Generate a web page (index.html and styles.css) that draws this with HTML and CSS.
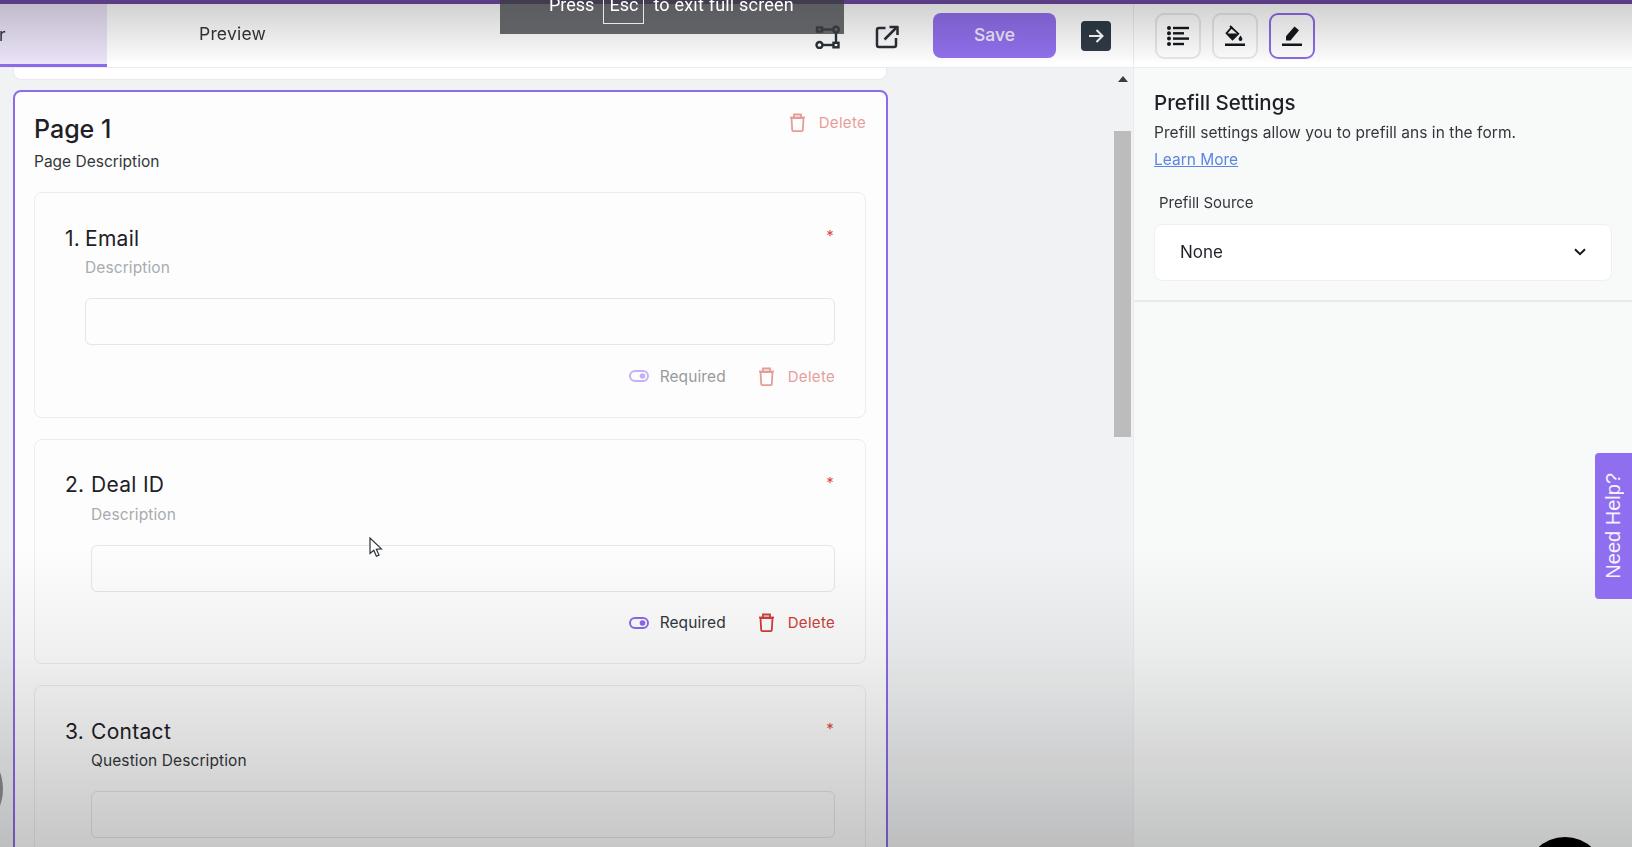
FILE: index.html

```html
<!DOCTYPE html>
<html lang="en">
<head>
    <meta charset="UTF-8">
    <title>Form Builder</title>
    <meta name="viewport" content="width=device-width, initial-scale=1.0">
    <link rel="stylesheet" href="styles.css">
</head>
<body>
    <div class="app">
        <div class="top-strip"></div>
        <div class="workspace">
            <section class="builder">
                <div class="toolbar">
                    <div class="tab tab-active"><span class="tab-cut">r</span></div>
                    <div class="tab tab-preview">Preview</div>
                    <div class="toolbar-actions">
                        <button class="icon-plain" aria-label="Flow">
                            <svg width="25" height="24" viewBox="0 0 25 24" fill="none" stroke="#2b3138" stroke-width="2.4">
                                <rect x="2" y="2.500" width="5" height="4"/>
                                <path d="M7 4.500h12"/>
                                <circle cx="21" cy="4.500" r="2.700"/>
                                <path d="M21 7.500v11"/>
                                <circle cx="4.500" cy="20" r="3"/>
                                <path d="M7.500 20h11"/>
                                <rect x="18.500" y="17.800" width="5" height="4.500"/>
                            </svg>
                        </button>
                        <button class="icon-plain" aria-label="Open">
                            <svg width="24" height="24" viewBox="0 0 24 24" fill="none" stroke="#2b3138" stroke-width="2.500" stroke-linejoin="round">
                                <path d="M10.500 3H4a2 2 0 0 0-2 2v15a2 2 0 0 0 2 2h15a2 2 0 0 0 2-2v-7"/>
                                <path d="M9.500 14.500L21 3"/>
                                <path d="M14.500 2h8v8"/>
                            </svg>
                        </button>
                        <button class="save-btn">Save</button>
                        <button class="next-btn" aria-label="Next">
                            <svg width="18" height="18" viewBox="0 0 18 18" fill="none" stroke="#fff" stroke-width="2">
                                <path d="M2 9h13.500"/>
                                <path d="M9.500 3l6 6-6 6"/>
                            </svg>
                        </button>
                    </div>
                </div>

                <div class="canvas">
                    <div class="canvas-scroll">
                        <div class="prev-page"></div>
                        <div class="page-card">
                            <div class="page-head">
                                <div>
                                    <h1>Page 1</h1>
                                    <p class="page-desc">Page Description</p>
                                </div>
                                <a class="delete faded">
                                    <svg class="trash" width="17" height="19" viewBox="0 0 17 19" fill="none" stroke="currentColor" stroke-width="1.800">
                                        <path d="M2.500 5h12l-.7 12.200a1 1 0 0 1-1 .9H4.200a1 1 0 0 1-1-.9z"/>
                                        <path d="M1 4.500h15"/>
                                        <path d="M5 4V1.500h7V4"/>
                                    </svg>
                                    Delete
                                </a>
                            </div>

                            <div class="question">
                                <div class="q-title"><span class="q-num">1.</span><span class="q-label q-email">Email</span><span class="star">*</span></div>
                                <div class="q-desc q-email muted">Description</div>
                                <div class="q-input q-email"></div>
                                <div class="q-actions faded-row">
                                    <span class="required">
                                        <svg class="toggle" width="20" height="12" viewBox="0 0 20 12"><rect x="1" y="1" width="18" height="10" rx="5" fill="none" stroke="currentColor" stroke-width="2"/><circle cx="13.500" cy="6" r="2.800" fill="currentColor"/></svg>
                                        Required
                                    </span>
                                    <a class="delete">
                                        <svg class="trash" width="17" height="19" viewBox="0 0 17 19" fill="none" stroke="currentColor" stroke-width="1.800">
                                            <path d="M2.500 5h12l-.7 12.200a1 1 0 0 1-1 .9H4.200a1 1 0 0 1-1-.9z"/>
                                            <path d="M1 4.500h15"/>
                                            <path d="M5 4V1.500h7V4"/>
                                        </svg>
                                        Delete
                                    </a>
                                </div>
                            </div>

                            <div class="question">
                                <div class="q-title"><span class="q-num">2.</span><span class="q-label">Deal ID</span><span class="star">*</span></div>
                                <div class="q-desc muted">Description</div>
                                <div class="q-input"></div>
                                <div class="q-actions">
                                    <span class="required">
                                        <svg class="toggle" width="20" height="12" viewBox="0 0 20 12"><rect x="1" y="1" width="18" height="10" rx="5" fill="none" stroke="currentColor" stroke-width="2"/><circle cx="13.500" cy="6" r="2.800" fill="currentColor"/></svg>
                                        Required
                                    </span>
                                    <a class="delete">
                                        <svg class="trash" width="17" height="19" viewBox="0 0 17 19" fill="none" stroke="currentColor" stroke-width="1.800">
                                            <path d="M2.500 5h12l-.7 12.200a1 1 0 0 1-1 .9H4.200a1 1 0 0 1-1-.9z"/>
                                            <path d="M1 4.500h15"/>
                                            <path d="M5 4V1.500h7V4"/>
                                        </svg>
                                        Delete
                                    </a>
                                </div>
                            </div>

                            <div class="question">
                                <div class="q-title"><span class="q-num">3.</span><span class="q-label">Contact</span><span class="star">*</span></div>
                                <div class="q-desc">Question Description</div>
                                <div class="q-input"></div>
                            </div>
                        </div>
                    </div>
                    <div class="scrollbar">
                        <span class="scroll-up"></span>
                        <span class="scroll-thumb"></span>
                    </div>
                </div>
            </section>

            <aside class="settings">
                <div class="settings-tools">
                    <button class="tool" aria-label="Fields">
                        <svg width="22" height="22" viewBox="0 0 22 22" fill="#15181c">
                            <circle cx="2" cy="3" r="2"/><rect x="6" y="1.800" width="16" height="2.400"/>
                            <circle cx="2" cy="8.300" r="2"/><rect x="6" y="7.100" width="11" height="2.400"/>
                            <circle cx="2" cy="13.600" r="2"/><rect x="6" y="12.400" width="16" height="2.400"/>
                            <circle cx="2" cy="19" r="2"/><rect x="6" y="17.800" width="11" height="2.400"/>
                        </svg>
                    </button>
                    <button class="tool" aria-label="Theme">
                        <svg width="20" height="22" viewBox="0 0 20 22">
                            <path d="M6.500 2.500l6.800 6.200-5.800 5.800-6-6.200z" fill="none" stroke="#15181c" stroke-width="1.800"/>
                            <path d="M2 8.500h10.500l-5 5.500z" fill="#15181c"/>
                            <path d="M5 1l2.500 2.500" stroke="#15181c" stroke-width="1.800"/>
                            <path d="M15.500 10.500c1 1.400 1.900 2.500 1.900 3.500a1.900 1.900 0 0 1-3.800 0c0-1 .9-2.100 1.900-3.500z" fill="#15181c"/>
                            <rect x="0" y="18.500" width="20" height="2.500" fill="#15181c"/>
                        </svg>
                    </button>
                    <button class="tool tool-active" aria-label="Prefill">
                        <svg width="20" height="22" viewBox="0 0 20 22" fill="#15181c">
                            <path d="M12.500 1.500l4.500 3.700-8.500 10.300H4v-4.200z"/>
                            <rect x="0" y="18.500" width="20" height="2.500"/>
                        </svg>
                    </button>
                </div>
                <div class="prefill">
                    <h2>Prefill Settings</h2>
                    <p>Prefill settings allow you to prefill ans in the form.</p>
                    <a class="learn-more">Learn More</a>
                    <label class="field-label">Prefill Source</label>
                    <div class="select-box">
                        <span>None</span>
                        <svg width="12" height="8" viewBox="0 0 12 8" fill="none" stroke="#15181c" stroke-width="2"><path d="M1 1.200l5 5 5-5"/></svg>
                    </div>
                </div>
            </aside>
        </div>

        <div class="shade-top"></div>
        <div class="shade-bottom"></div>

        <div class="fullscreen-note">
            <span>Press</span><span class="esc-key">Esc</span><span class="note-rest">to exit full screen</span>
        </div>
        <div class="need-help"><span>Need Help?</span></div>
        <div class="chat-bubble"></div>
        <div class="edge-blob"></div>
        <svg class="cursor" width="15" height="21" viewBox="0 0 15 21" fill="#fff" stroke="#2b3138" stroke-width="1.200">
            <path d="M1 1v15.500l3.800-3.300 2.600 6 2.600-1.100-2.600-5.900 5-.3z"/>
        </svg>
    </div>
</body>
</html>
```

FILE: styles.css

```css
:root {
    --purple: #8b6be8;
    --purple-dark: #5a3d85;
    --line: #ebecee;
    --text: #1d2126;
    --red: #cf3f36;
}

* {
    box-sizing: border-box;
}

body {
    margin: 0;
    font-family: "Inter", "Noto Sans", sans-serif;
    color: var(--text);
    background: #f1f2f3;
}

h1, h2, p {
    margin: 0;
    font-weight: 500;
}

button {
    font-family: inherit;
    border: none;
    background: none;
    padding: 0;
}

.app {
    position: relative;
    width: 1632px;
    height: 847px;
    overflow: hidden;
    display: flex;
    flex-direction: column;
    filter: blur(0.4px);
}

.top-strip {
    height: 4px;
    flex: none;
    background: var(--purple-dark);
}

.workspace {
    flex: 1;
    display: flex;
    min-height: 0;
}

/* left side */
.builder {
    width: 1134px;
    display: flex;
    flex-direction: column;
    border-right: 1px solid var(--line);
}

.toolbar {
    height: 63px;
    flex: none;
    display: flex;
    background: #fff;
}

.tab {
    display: flex;
    align-items: center;
    font-size: 17.500px;
    color: #33373c;
}

.tab-active {
    width: 107px;
    background: #ece4f8;
    border-bottom: 3px solid #8b6be8;
}

.tab-cut {
    margin-left: -1px;
}

.tab-preview {
    margin-left: 92px;
    padding-bottom: 4px;
    letter-spacing: 0.2px;
}

.toolbar-actions {
    margin-left: auto;
    display: flex;
    align-items: center;
    padding-right: 22px;
}

.icon-plain {
    display: flex;
    margin-right: 35px;
    margin-top: 2px;
}

.icon-plain + .icon-plain {
    margin-right: 34px;
}

.save-btn {
    width: 123px;
    height: 45px;
    margin-right: 25px;
    padding-bottom: 2px;
    border-radius: 8px;
    background: #9270ee;
    color: #f1ecff;
    font-size: 17.500px;
    font-weight: 500;
}

.next-btn {
    width: 30px;
    height: 30px;
    margin-top: 1px;
    border-radius: 4px;
    background: #2e3a46;
    display: flex;
    align-items: center;
    justify-content: center;
}

.canvas {
    flex: 1;
    display: flex;
    min-height: 0;
    overflow: hidden;
    border-top: 1px solid var(--line);
}

.canvas-scroll {
    flex: 1;
    padding-left: 13px;
    overflow: hidden;
}

.prev-page {
    width: 874px;
    height: 12px;
    margin-bottom: 10px;
    background: #fff;
    border: 1px solid #e8e9eb;
    border-top: none;
    border-radius: 0 0 8px 8px;
}

.page-card {
    width: 875px;
    padding: 0 20px 40px 19px;
    background: #fdfdfd;
    border: 2px solid var(--purple);
    border-radius: 8px;
}

.page-head {
    display: flex;
    justify-content: space-between;
    align-items: flex-start;
    height: 100px;
}

.page-head h1 {
    margin-top: 21px;
    font-size: 25px;
    line-height: 32px;
}

.page-desc {
    margin-top: 7px;
    font-size: 15.500px;
    font-weight: 400;
    line-height: 20px;
    color: #33373c;
}

.page-head .delete {
    margin-top: 21px;
}

.delete {
    display: flex;
    align-items: center;
    gap: 13px;
    font-size: 15px;
    letter-spacing: 0.3px;
    color: var(--red);
}

.faded {
    opacity: 0.5;
}

.question {
    height: 225.500px;
    margin-bottom: 21px;
    padding: 0 30px;
    background: #fdfdfd;
    border: 1px solid var(--line);
    border-radius: 8px;
}

.q-title {
    display: flex;
    align-items: center;
    margin-top: 31px;
    height: 28px;
    font-size: 21px;
    letter-spacing: 0.3px;
}

.q-num {
    width: 26px;
}

.q-label {
    flex: 1;
}

.q-label.q-email {
    margin-left: -6px;
}

.q-title .star {
    color: #e2483d;
    font-size: 15px;
    line-height: 28px;
    margin-top: -4px;
    margin-right: 1px;
}

.q-desc {
    margin: 5px 0 0 26px;
    font-size: 15.500px;
    letter-spacing: 0.1px;
    line-height: 22px;
    color: #33373c;
}

.q-desc.q-email,
.q-input.q-email {
    margin-left: 20px;
}

.muted {
    color: #a8abb0;
}

.q-input {
    height: 47px;
    margin: 19px 0 0 26px;
    background: #fdfdfd;
    border: 1px solid #e5e6e8;
    border-radius: 6px;
}

.q-actions {
    display: flex;
    justify-content: flex-end;
    align-items: center;
    gap: 32px;
    height: 24px;
    margin-top: 19px;
}

.faded-row {
    opacity: 0.5;
}

.required {
    display: flex;
    align-items: center;
    gap: 11px;
    font-size: 15.500px;
    letter-spacing: 0.1px;
    color: #33373c;
}

.toggle {
    color: var(--purple);
}

.scrollbar {
    position: relative;
    width: 21px;
    flex: none;
    background: #f1f2f3;
}

.scroll-up {
    display: block;
    width: 0;
    margin: 8px auto 0;
    border-left: 5px solid transparent;
    border-right: 5px solid transparent;
    border-bottom: 6px solid #3a3d40;
}

.scroll-thumb {
    display: block;
    width: 17px;
    height: 306px;
    margin: 49px 0 0 2px;
    background: #bcbcbc;
}

/* right side */
.settings {
    flex: 1;
    display: flex;
    flex-direction: column;
    background: #f8f9f9;
}

.settings-tools {
    height: 63px;
    flex: none;
    display: flex;
    gap: 11px;
    padding: 9px 0 0 21px;
    background: #fff;
}

.tool {
    width: 46px;
    height: 46px;
    display: flex;
    align-items: center;
    justify-content: center;
    border: 2px solid #e8e8ea;
    border-radius: 9px;
}

.tool-active {
    border-color: var(--purple);
}

.prefill {
    padding: 21px 20px 0 20px;
    height: 235px;
    border-top: 1px solid var(--line);
    border-bottom: 2px solid #e9eaec;
}

.prefill h2 {
    font-size: 20.500px;
    line-height: 28px;
}

.prefill p {
    margin-top: 6px;
    font-size: 15.500px;
    font-weight: 400;
    letter-spacing: 0.05px;
    line-height: 20px;
    color: #33373c;
}

.learn-more {
    display: block;
    margin-top: 6px;
    font-size: 15.500px;
    line-height: 22px;
    color: #5b86e5;
    text-decoration: underline;
}

.field-label {
    display: block;
    margin: 22px 0 0 5px;
    font-size: 15px;
    line-height: 20px;
    color: #33373c;
}

.select-box {
    height: 57px;
    margin: 11px 0 0 0;
    padding: 0 25px 1px 25px;
    display: flex;
    justify-content: space-between;
    align-items: center;
    background: #fff;
    border: 1px solid #eff0f2;
    border-radius: 8px;
    font-size: 17px;
}

/* things lying over the page */
.shade-top,
.shade-bottom {
    position: absolute;
    left: 0;
    right: 0;
    pointer-events: none;
}

.shade-top {
    top: 4px;
    height: 60px;
    background: linear-gradient(rgba(0, 0, 0, 0.18), rgba(0, 0, 0, 0.03) 85%, rgba(0, 0, 0, 0));
}

.shade-bottom {
    bottom: 0;
    height: 300px;
    background: linear-gradient(rgba(0, 0, 0, 0), rgba(0, 0, 0, 0.05) 35%, rgba(0, 0, 0, 0.21));
}

.fullscreen-note {
    position: absolute;
    top: 0;
    left: 500px;
    width: 344px;
    height: 34px;
    padding-left: 49px;
    display: flex;
    align-items: flex-start;
    gap: 9px;
    background: rgba(58, 60, 64, 0.78);
    color: #fff;
    font-family: "Roboto", sans-serif;
    font-size: 18px;
    line-height: 16px;
}

.fullscreen-note span {
    margin-top: -3px;
}

.fullscreen-note .esc-key {
    width: 41px;
    height: 27px;
    text-align: center;
    border: 1px solid #e8e8e8;
    border-top: none;
}

.note-rest {
    letter-spacing: 0.2px;
}

.need-help {
    position: absolute;
    top: 453px;
    right: 0;
    width: 37px;
    height: 146px;
    display: flex;
    align-items: center;
    justify-content: center;
    background: #8f6ff0;
    border-radius: 4px 0 0 4px;
    color: #f6f2ff;
    font-family: "Liberation Sans", sans-serif;
    font-size: 20px;
}

.need-help span {
    writing-mode: vertical-rl;
    transform: rotate(180deg);
}

.chat-bubble {
    position: absolute;
    left: 1525px;
    top: 837px;
    width: 80px;
    height: 80px;
    border-radius: 50%;
    background: #000;
}

.edge-blob {
    position: absolute;
    left: -30px;
    top: 760px;
    width: 33px;
    height: 58px;
    border-radius: 50%;
    background: #77787a;
}

.cursor {
    position: absolute;
    left: 369px;
    top: 537px;
}
```
